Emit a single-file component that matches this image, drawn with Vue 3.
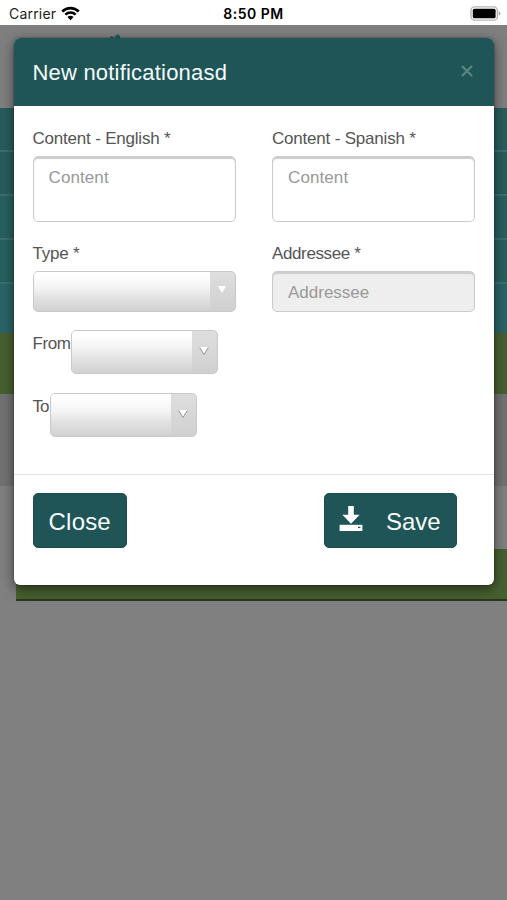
<script setup>
const stripes = [1, 2, 3, 4, 5]
const contents = [
  { id: 'en', label: 'Content - English *' },
  { id: 'es', label: 'Content - Spanish *' }
]
const dates = [
  { id: 'from', label: 'From' },
  { id: 'to', label: 'To' }
]
</script>

<template>
  <div class="screen">
    <header class="status">
      <div class="carrier">
        <span class="carrier-name">Carrier</span>
        <svg class="wifi" viewBox="0 0 18 14" width="19" height="15">
          <path d="M1.2 5.1 C5.5 .8 12.5 .8 16.8 5.1" fill="none" stroke="#000" stroke-width="2.5" />
          <path d="M4.1 8.1 C6.9 5.4 11.1 5.4 13.9 8.1" fill="none" stroke="#000" stroke-width="2.4" />
          <path d="M6.1 10.4 Q9 7.8 11.9 10.4 L9 13.5 Z" fill="#000" />
        </svg>
      </div>
      <span class="time">8:50 PM</span>
      <svg class="battery" viewBox="0 0 31 15" width="31" height="15">
        <rect x="1" y=".9" width="26.4" height="13.2" rx="3.6" fill="#fff" stroke="#b5b5b5" stroke-width="1.4" />
        <rect x="2.8" y="2.7" width="22.8" height="9.6" rx="1.6" fill="#000" />
        <path d="M28.7 5.2 Q30.5 6 30.5 7.5 Q30.5 9 28.7 9.8 Z" fill="#aaa" />
      </svg>
    </header>

    <main class="stage">
      <div class="page">
        <div class="banner">
          <svg class="leaf" viewBox="0 0 14 9" width="14" height="9">
            <path d="M1 5 L3 2 6 3 5 9 H1Z M7 2 L10 0 12 2 12 9 H7Z" fill="#285e5c" />
          </svg>
        </div>
        <div v-for="n in stripes" :key="n" class="stripe"></div>
        <div class="green"></div>
        <div class="gray-dark"></div>
        <div class="gray"></div>
        <div class="green-foot"></div>
      </div>

      <section class="modal">
        <div class="modal-head">
          <span class="title">New notificationasd</span>
          <svg class="x" viewBox="0 0 12 12" width="12" height="12">
            <path d="M1 1 L11 11 M11 1 L1 11" stroke="#5b8485" stroke-width="2.2" />
          </svg>
        </div>

        <div class="modal-body">
          <div class="grid">
            <label v-for="c in contents" :key="c.id" class="field">
              <span class="label">{{ c.label }}</span>
              <span class="box area">Content</span>
            </label>
            <div class="field">
              <span class="label">Type *</span>
              <div class="select wide">
                <div class="shine"></div>
                <svg class="arrow" viewBox="0 0 12 11" width="12" height="11">
                  <path d="M2 2 H10 L6 9 Z" fill="#fff" />
                </svg>
              </div>
            </div>
            <label class="field">
              <span class="label narrow">Addressee *</span>
              <span class="box disabled">Addressee</span>
            </label>
          </div>
          <div v-for="d in dates" :key="d.id" class="date-row">
            <span class="date-label" :class="d.id">{{ d.label }}</span>
            <div class="select">
              <div class="shine"></div>
              <svg class="arrow" viewBox="0 0 12 11" width="12" height="11">
                <path d="M2 2 H10 L6 9 Z" fill="#fff" />
                <path d="M1.8 2.6 L6 9.6 L10.2 2.6" fill="none" stroke="#999" stroke-width="1" />
              </svg>
            </div>
          </div>
        </div>

        <footer class="modal-foot">
          <button class="btn close"><span>Close</span></button>
          <button class="btn save">
            <svg viewBox="0 0 24 26" width="24" height="26">
              <path d="M9.2 0 H14.8 V8.8 H20.6 L12 17.8 L3.4 8.8 H9.2 Z" fill="#fff" />
              <path d="M.6 18.8 H23.4 V25 H.6 Z" fill="#fff" />
              <rect x="19" y="20.8" width="2.4" height="1.3" fill="#1f5556" />
            </svg>
            <span>Save</span>
          </button>
        </footer>
      </section>
    </main>
  </div>
</template>

<style>
body {
  margin: 0;
  background: #808080;
}
</style>

<style scoped>
.screen {
  width: 507px;
  height: 900px;
  overflow: hidden;
  display: flex;
  flex-direction: column;
  background: #808080;
  font-family: "Liberation Sans", Arial, sans-serif;
}
.status {
  height: 25px;
  flex: none;
  display: grid;
  grid-template-columns: 1fr auto 1fr;
  align-items: center;
  padding: 1px 6px 0 9px;
  box-sizing: border-box;
  background: #fff;
}
.carrier {
  display: flex;
  align-items: center;
  gap: 5px;
  color: #222;
  font: 14px/20px Inter, "Liberation Sans", sans-serif;
}
.carrier-name {
  letter-spacing: 0.2px;
  padding-top: 1px;
}
.time {
  font: 600 14px/20px Inter, "Liberation Sans", sans-serif;
  letter-spacing: 0.5px;
  padding-top: 1px;
  margin-right: 3px;
}
.battery {
  justify-self: end;
}
.stage {
  display: grid;
  flex: 1;
  align-items: start;
}
.page,
.modal {
  grid-area: 1 / 1;
}
.banner {
  height: 83px;
  padding: 9px 0 0 108px;
  box-sizing: border-box;
  background: #807f80;
}
.leaf {
  display: block;
}
.stripe {
  height: 44px;
  box-sizing: border-box;
  border-bottom: 2px solid #3b6f70;
  background: #285c5c;
}
.stripe:nth-child(n + 4) {
  background: #28605f;
}
.stripe:nth-child(6) {
  height: 49px;
  border-bottom: 0;
  background: #2a6468;
}
.green {
  height: 61px;
  background: #476030;
}
.gray-dark {
  height: 92px;
  background: #727272;
}
.gray {
  height: 63px;
  background: #808080;
}
.green-foot {
  height: 52px;
  margin-left: 16px;
  box-sizing: border-box;
  border-bottom: 2px solid #26371a;
  background: #476030;
}
.modal {
  width: 480px;
  height: 547px;
  margin: 13px 0 0 14px;
  display: flex;
  flex-direction: column;
  border-radius: 6px;
  overflow: hidden;
  background: #fff;
  box-shadow: 0 4px 13px rgba(0, 0, 0, 0.5), 0 0 2px rgba(0, 0, 0, 0.5);
}
.modal-head {
  height: 68px;
  flex: none;
  display: flex;
  justify-content: space-between;
  padding: 0 21px 0 18.5px;
  background: #1f5556;
}
.title {
  color: #f4fafa;
  font-size: 22px;
  line-height: 70px;
  letter-spacing: 0.2px;
}
.x {
  margin-top: 27px;
}
.modal-body {
  height: 369px;
  flex: none;
  box-sizing: border-box;
  padding: 21px 18.5px 0;
  border-bottom: 1px solid #e3e3e3;
}
.grid {
  display: grid;
  grid-template-columns: 203px 203px;
  column-gap: 36.5px;
  row-gap: 20px;
}
.field {
  display: flex;
  flex-direction: column;
  gap: 6px;
}
.label,
.date-label {
  color: #555;
  font-size: 17px;
  line-height: 23px;
  letter-spacing: -0.2px;
  white-space: nowrap;
}
.label.narrow {
  letter-spacing: -0.38px;
}
.box {
  box-sizing: border-box;
  border: 1px solid #ccc;
  border-radius: 5px;
  box-shadow: inset 0 2px 1px #ccc;
  padding: 9px 15px;
  color: #999;
  font-size: 17px;
  line-height: 23px;
  letter-spacing: 0.1px;
}
.area {
  height: 66px;
}
.disabled {
  height: 41px;
  background: #eee;
  letter-spacing: 0;
}
.select {
  width: 147px;
  height: 44px;
  box-sizing: border-box;
  border: 1px solid #c9c9c9;
  border-radius: 5px;
  overflow: hidden;
  display: flex;
  align-items: center;
  background: linear-gradient(#dedede, #d0d0d0);
}
.shine {
  width: 120px;
  flex: none;
  align-self: stretch;
  background: linear-gradient(#fff 8%, #f4f4f4 40%, #e2e2e2 66%, #d1d1d1);
}
.arrow {
  margin-left: 6px;
  margin-top: -4px;
}
.wide {
  width: 203px;
  height: 41px;
}
.wide .shine {
  width: 176px;
}
.date-row {
  display: flex;
  margin-top: 18px;
  height: 45px;
}
.date-label {
  padding-top: 2px;
}
.date-label.from {
  width: 38px;
  letter-spacing: -0.4px;
}
.date-label.to {
  width: 17px;
  letter-spacing: -1px;
}
.modal-foot {
  display: flex;
  justify-content: space-between;
  padding: 18px 37px 0 18.5px;
}
.btn {
  height: 55px;
  border: 1px solid #194d4e;
  border-radius: 5px;
  background: #1f5556;
  color: #f7fbfb;
  display: flex;
  align-items: center;
  font: 24px/30px "Liberation Sans", Arial, sans-serif;
  padding: 3px 0 0;
}
.close {
  width: 94.5px;
  justify-content: center;
  letter-spacing: 0.2px;
}
.save {
  width: 133.5px;
  padding-left: 14.5px;
  gap: 23px;
}
.save svg {
  margin-top: -7px;
}
</style>
